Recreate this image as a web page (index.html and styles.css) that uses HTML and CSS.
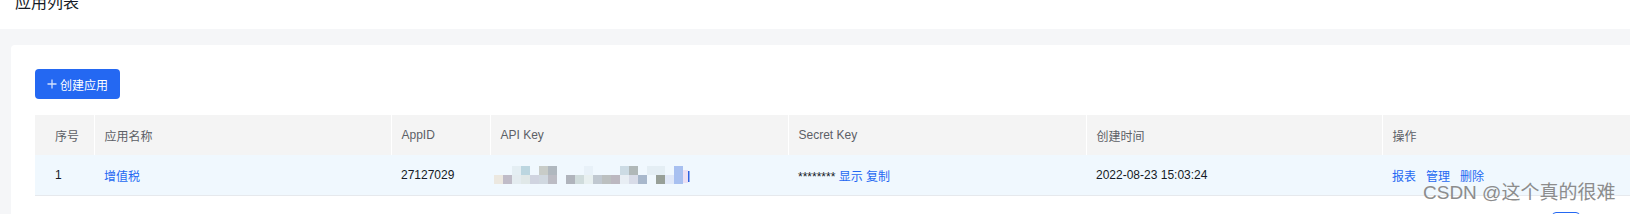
FILE: index.html
```html
<!DOCTYPE html>
<html lang="zh-CN">
<head>
<meta charset="UTF-8">
<title>应用列表</title>
<link rel="stylesheet" href="styles.css">
</head>
<body>
<div class="top-bar">
    <h1 class="page-title">应用列表</h1>
</div>

<div class="card">
    <button class="create-button">
        <svg class="plus-icon" width="10" height="10" viewBox="0 0 10 10">
            <path d="M5 0.5V9.5M0.5 5H9.5" stroke="#ffffff" stroke-opacity="0.8" stroke-width="1.3" fill="none"/>
        </svg>
        <span>创建应用</span>
    </button>

    <table class="app-table">
        <colgroup>
            <col style="width: 59px">
            <col style="width: 297px">
            <col style="width: 99px">
            <col style="width: 298px">
            <col style="width: 298px">
            <col style="width: 296px">
            <col style="width: 296px">
        </colgroup>
        <thead>
            <tr>
                <th>序号</th>
                <th>应用名称</th>
                <th>AppID</th>
                <th>API Key</th>
                <th>Secret Key</th>
                <th>创建时间</th>
                <th>操作</th>
            </tr>
        </thead>
        <tbody>
            <tr>
                <td>1</td>
                <td><a class="link" href="#">增值税</a></td>
                <td>27127029</td>
                <td>
                    <!-- api key is pixelated in the screenshot -->
                    <svg class="mosaic" width="198" height="18" viewBox="0 0 198 18">
                        <rect x="18" y="0" width="9" height="9" fill="#e4eef3"/>
                        <rect x="27" y="0" width="9" height="9" fill="#bcd6e0"/>
                        <rect x="45" y="0" width="9" height="9" fill="#c8ccc8"/>
                        <rect x="54" y="0" width="9" height="9" fill="#b0b8bf"/>
                        <rect x="90" y="0" width="9" height="9" fill="#e8f1f8"/>
                        <rect x="126" y="0" width="9" height="9" fill="#ccdbe4"/>
                        <rect x="135" y="0" width="9" height="9" fill="#b0b8b8"/>
                        <rect x="153" y="0" width="18" height="9" fill="#e4eef4"/>
                        <rect x="180" y="0" width="9" height="18" fill="#a8c0f0"/>
                        <rect x="0" y="9" width="9" height="9" fill="#ece8e0"/>
                        <rect x="9" y="9" width="9" height="9" fill="#c0bcc8"/>
                        <rect x="18" y="9" width="9" height="9" fill="#e4ecf0"/>
                        <rect x="27" y="9" width="9" height="9" fill="#e0e8e8"/>
                        <rect x="36" y="9" width="9" height="9" fill="#d0d4e0"/>
                        <rect x="45" y="9" width="9" height="9" fill="#d0d8e0"/>
                        <rect x="54" y="9" width="9" height="9" fill="#bcbcc4"/>
                        <rect x="72" y="9" width="9" height="9" fill="#b0b4bc"/>
                        <rect x="81" y="9" width="9" height="9" fill="#d0dcdc"/>
                        <rect x="90" y="9" width="9" height="9" fill="#e8f0f0"/>
                        <rect x="99" y="9" width="9" height="9" fill="#c0c8d0"/>
                        <rect x="108" y="9" width="9" height="9" fill="#bcc0c0"/>
                        <rect x="117" y="9" width="9" height="9" fill="#bcb8c0"/>
                        <rect x="126" y="9" width="9" height="9" fill="#e8eef4"/>
                        <rect x="135" y="9" width="9" height="9" fill="#d8dce8"/>
                        <rect x="144" y="9" width="9" height="9" fill="#a8b8cc"/>
                        <rect x="162" y="9" width="9" height="9" fill="#98a098"/>
                        <rect x="171" y="9" width="9" height="9" fill="#e0e8f8"/>
                        <rect x="189" y="4" width="5" height="13" fill="#ece0f4"/>
                        <rect x="194" y="5" width="1.5" height="11" fill="#3060e0"/>
                    </svg>
                </td>
                <td>******** <a class="link" href="#">显示</a> <a class="link" href="#">复制</a></td>
                <td>2022-08-23 15:03:24</td>
                <td>
                    <div class="actions">
                        <a class="link" href="#">报表</a>
                        <a class="link" href="#">管理</a>
                        <a class="link" href="#">删除</a>
                    </div>
                </td>
            </tr>
        </tbody>
    </table>

    <div class="pager">
        <span class="page-item active"></span>
    </div>
</div>

<div class="watermark">CSDN @这个真的很难</div>
</body>
</html>
```

FILE: styles.css
```css
body {
    margin: 0;
    padding: 0;
    background-color: #f5f6f8;
    font-family: "Liberation Sans", "Noto Sans CJK SC", sans-serif;
    font-size: 12px;
    color: #151b26;
    overflow: hidden;
}

.top-bar {
    height: 29px;
    padding-left: 15px;
    background-color: #ffffff;
    overflow: hidden;
}

.page-title {
    margin: -5px 0 0 0;
    font-size: 16px;
    line-height: 16px;
    font-weight: 400;
    color: #151b26;
}

.card {
    width: 1667px;
    margin: 16px 0 0 11px;
    padding: 24px 0 0 24px;
    height: 200px;
    background-color: #ffffff;
    border-radius: 4px;
}

.create-button {
    display: flex;
    align-items: center;
    justify-content: center;
    gap: 3px;
    width: 85px;
    height: 30px;
    padding: 0;
    border: none;
    border-radius: 4px;
    background-color: #2468f2;
    color: #ffffff;
    font-family: inherit;
    font-size: 12px;
    cursor: pointer;
}

.plus-icon {
    display: block;
}

.app-table {
    margin-top: 16px;
    width: 1643px;
    table-layout: fixed;
    border-collapse: collapse;
}

.app-table th {
    height: 40px;
    padding: 0 10px;
    text-align: left;
    font-weight: 400;
    color: #5c5f66;
    background-color: #f4f4f4;
    border-right: 1px solid #ffffff;
}

.app-table td {
    height: 40px;
    padding: 0 10px;
    background-color: #f0f8fe;
    border-bottom: 1px solid #e6e9ed;
    color: #151b26;
}

.app-table th:first-child,
.app-table td:first-child {
    padding-left: 20px;
}

.app-table td:nth-child(4) {
    padding-left: 4px;
}

.mosaic {
    display: block;
}

.link {
    color: #2468f2;
    text-decoration: none;
}

.actions {
    display: flex;
    gap: 10px;
}

.pager {
    display: flex;
    justify-content: flex-end;
    width: 1545px;
    margin-top: 16px;
}

.page-item {
    width: 26px;
    height: 26px;
    border: 1px solid #e8e9eb;
    border-radius: 4px;
}

.page-item.active {
    border-color: #2468f2;
}

.watermark {
    position: absolute;
    left: 1423px;
    top: 183px;
    font-size: 19px;
    line-height: 19px;
    color: #8c8c8c;
    white-space: nowrap;
}
```
